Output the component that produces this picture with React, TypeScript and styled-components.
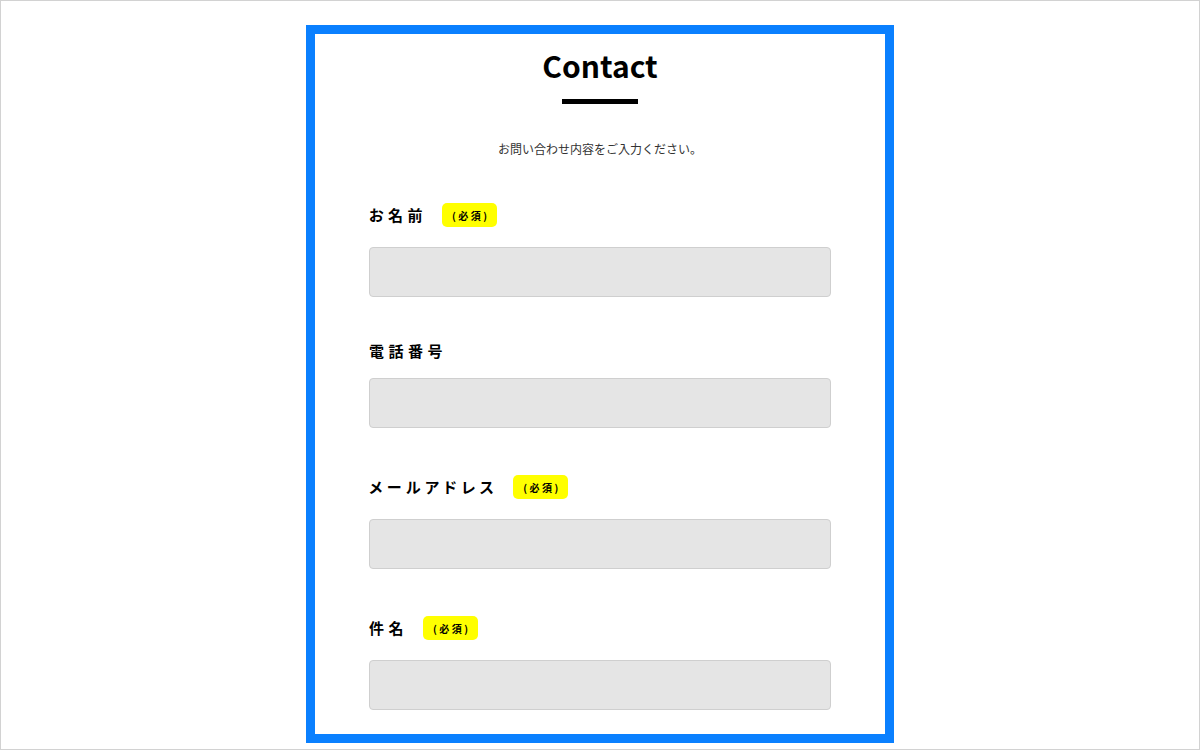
import styled, { createGlobalStyle } from "styled-components";

const GlobalStyle = createGlobalStyle`
  html, body {
    margin: 0;
    padding: 0;
    background: #fff;
  }
  body {
    font-family: "Noto Sans CJK JP", "Noto Sans", sans-serif;
    color: #111;
  }
  * {
    box-sizing: border-box;
  }
`;

const fields = [
  { label: "お名前", required: true },
  { label: "電話番号", required: false },
  { label: "メールアドレス", required: true },
  { label: "件名", required: true },
];

const App = () => {
  return (
    <>
      <GlobalStyle />
      <Page>
        <Frame>
          <Title>Contact</Title>
          <TitleBar />
          <Lead>お問い合わせ内容をご入力ください。</Lead>
          <Form>
            {fields.map((f) => (
              <Field key={f.label}>
                <LabelRow>
                  <Label>{f.label}</Label>
                  {f.required && <Badge>(必須)</Badge>}
                </LabelRow>
                <Input type="text" />
              </Field>
            ))}
          </Form>
        </Frame>
      </Page>
    </>
  );
};

export default App;

/* ================= STYLES ================= */

const Page = styled.div`
  width: 1200px;
  height: 750px;
  border: 1px solid #d2d2d2;
  padding-top: 24px;
  overflow: hidden;
`;

const Frame = styled.div`
  width: 588px;
  height: 718px;
  margin: 0 auto;
  border: 9px solid #0a80ff;
  padding: 12px 54px 0;
  overflow: hidden;
`;

const Title = styled.h1`
  margin: 0;
  font-family: "Noto Sans CJK JP", "Noto Sans", sans-serif;
  font-size: 30px;
  font-weight: 700;
  line-height: 38px;
  text-align: center;
  color: #000;
`;

const TitleBar = styled.div`
  width: 76px;
  height: 5px;
  margin: 15px auto 0;
  background: #000;
`;

const Lead = styled.p`
  margin: 37px 0 0;
  font-size: 12px;
  line-height: 16px;
  text-align: center;
  color: #333;
`;

const Form = styled.div`
  display: flex;
  flex-direction: column;
`;

const Field = styled.div`
  display: flex;
  flex-direction: column;
  margin-top: 47px;

  &:first-child {
    margin-top: 46px;
  }
`;

const LabelRow = styled.div`
  display: flex;
  align-items: center;
  min-height: 14px;
`;

const Label = styled.span`
  font-size: 15px;
  font-weight: 700;
  line-height: 14px;
  letter-spacing: 0.3em;
  font-feature-settings: "palt";
  color: #000;
`;

const Badge = styled.span`
  display: inline-flex;
  align-items: center;
  justify-content: center;
  height: 24px;
  padding: 0 7px 0 10px;
  margin-left: 15px;
  background: #ffff00;
  border-radius: 5px;
  font-size: 10px;
  font-weight: 700;
  letter-spacing: 0.25em;
  color: #000;
`;

const Input = styled.input`
  display: block;
  width: 100%;
  height: 50px;
  margin-top: 20px;
  background: #e5e5e5;
  border: 1px solid #cfcfcf;
  border-radius: 4px;
  outline: none;
`;
